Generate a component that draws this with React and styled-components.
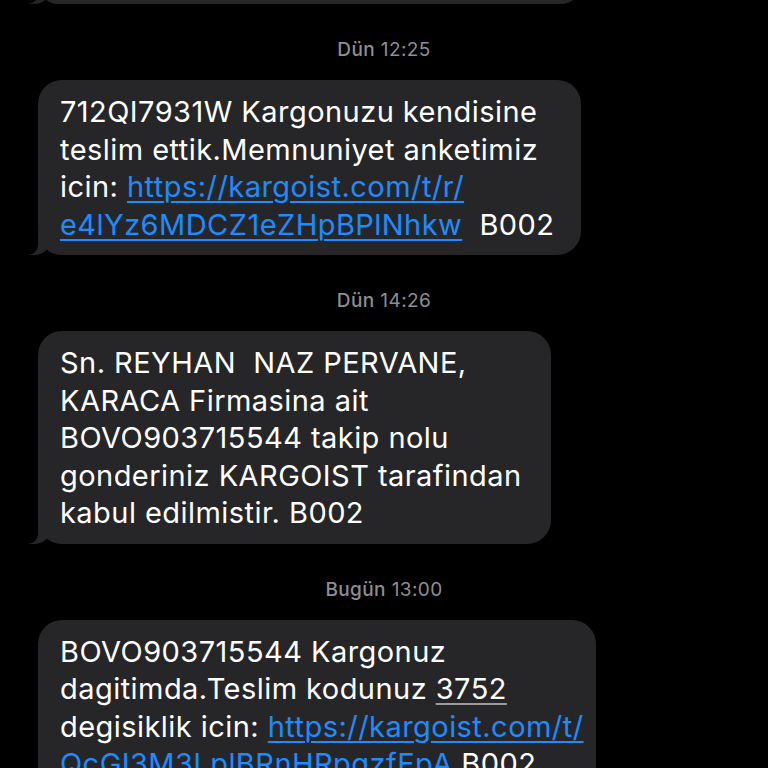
import React from 'react';
import styled, { createGlobalStyle } from 'styled-components';

const GlobalStyle = createGlobalStyle`
  html, body {
    margin: 0;
    padding: 0;
    background: #000;
    height: 768px;
    overflow: hidden;
  }
  body {
    font-family: Inter, "Noto Sans", "DejaVu Sans", sans-serif;
    -webkit-font-smoothing: antialiased;
  }
`;

const Thread = styled.div`
  display: flex;
  flex-direction: column;
  align-items: flex-start;
  padding: 0 0 0 38px;
`;

const Stamp = styled.div`
  align-self: stretch;
  margin: 35px 0 19px -38px;
  text-align: center;
  font-size: 19px;
  line-height: 22px;
  color: #8e8e93;
  letter-spacing: 0.4px;
  b {
    font-weight: 500;
  }
`;

const Bubble = styled.div`
  position: relative;
  box-sizing: border-box;
  background: #262628;
  color: #fff;
  border-radius: 24px;
  padding: 13px 22px 12px;
  font-size: 29px;
  line-height: 37.5px;
  letter-spacing: 0.45px;
  width: ${p => (p.$width ? `${p.$width}px` : 'auto')};
  height: ${p => (p.$height ? `${p.$height}px` : 'auto')};
  margin-top: ${p => p.$offset || 0}px;

  &::before {
    content: "";
    position: absolute;
    bottom: 0;
    left: -10px;
    width: 22px;
    height: 22px;
    background: #262628;
    border-bottom-right-radius: 16px 14px;
  }
  &::after {
    content: "";
    position: absolute;
    bottom: 0;
    left: -26px;
    width: 26px;
    height: 22px;
    background: #000;
    border-bottom-right-radius: 10px;
  }
`;

const Line = styled.span`
  display: block;
  white-space: pre;
`;

const Link = styled.a`
  color: #1d8cff;
  text-decoration: underline;
  text-decoration-thickness: 1.5px;
  text-underline-offset: 4px;
`;

const Code = styled.span`
  text-decoration: underline;
  text-decoration-color: #9a9a9f;
  text-decoration-thickness: 1.5px;
  text-underline-offset: 4px;
`;

const messages = [
  {
    day: 'Dün',
    time: '12:25',
    width: 543,
    lines: [
      ['712QI7931W Kargonuzu kendisine'],
      ['teslim ettik.Memnuniyet anketimiz'],
      ['icin: ', { link: 'https://kargoist.com/t/r/' }],
      [{ link: 'e4lYz6MDCZ1eZHpBPlNhkw' }, '  B002'],
    ],
  },
  {
    day: 'Dün',
    time: '14:26',
    width: 513,
    lines: [
      ['Sn. REYHAN  NAZ PERVANE,'],
      ['KARACA Firmasina ait'],
      ['BOVO903715544 takip nolu'],
      ['gonderiniz KARGOIST tarafindan'],
      ['kabul edilmistir. B002'],
    ],
  },
  {
    day: 'Bugün',
    time: '13:00',
    width: 558,
    lines: [
      ['BOVO903715544 Kargonuz'],
      ['dagitimda.Teslim kodunuz ', { code: '3752' }],
      ['degisiklik icin: ', { link: 'https://kargoist.com/t/' }],
      [{ link: 'QcGI3M3LplBRnHRpgzfEpA' }, ' B002'],
    ],
  },
];

const renderPart = (part, i) => {
  if (typeof part === 'string') return <React.Fragment key={i}>{part}</React.Fragment>;
  if (part.link) return <Link key={i} href="#">{part.link}</Link>;
  return <Code key={i}>{part.code}</Code>;
};

const App = () => {
  return (
    <>
      <GlobalStyle />
      <Thread>
        <Bubble $width={543} $height={40} $offset={-36} />
        {messages.map((m, idx) => (
          <React.Fragment key={idx}>
            <Stamp>
              <b>{m.day}</b> {m.time}
            </Stamp>
            <Bubble $width={m.width}>
              {m.lines.map((parts, j) => (
                <Line key={j}>{parts.map(renderPart)}</Line>
              ))}
            </Bubble>
          </React.Fragment>
        ))}
      </Thread>
    </>
  );
};

export default App;
